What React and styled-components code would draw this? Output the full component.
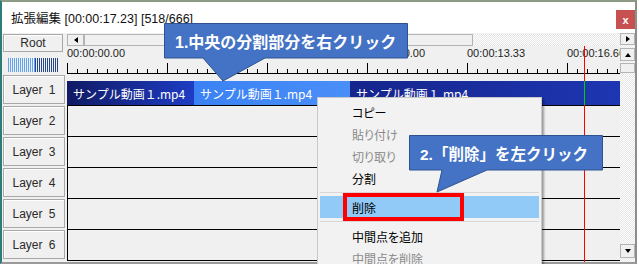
import React from 'react';
import styled, { createGlobalStyle } from 'styled-components';

const FONT = `"Liberation Sans", "Noto Sans CJK JP", sans-serif`;
const JP = `"Noto Sans CJK JP", sans-serif`;

const GlobalStyle = createGlobalStyle`
  html, body { margin: 0; padding: 0; background: #ffffff; }
  body { font-family: ${FONT}; }
  * { box-sizing: border-box; }
`;

const Stage = styled.div`
  position: relative;
  width: 639px;
  height: 264px;
  overflow: hidden;
  background: #ffffff;
`;

const Window = styled.div`
  width: 637px;
  height: 264px;
  display: flex;
  flex-direction: column;
  border-top: 2px solid #8c9a86;
  border-left: 2px solid #2c7c78;
  border-right: 2px solid #8a8f8a;
  border-bottom: 2px solid #9a9a9a;
  background: #f0f0f0;
`;

const TitleBar = styled.div`
  height: 31px;
  flex: none;
  display: flex;
  align-items: center;
  padding-left: 9px;
  background: #ffffff;
  font-size: 12.5px;
  color: #111;
`;

const CloseButton = styled.div`
  margin-left: auto;
  margin-top: 4px;
  width: 19px;
  height: 19px;
  background: #c75050;
  color: #ffffff;
  font: bold 11px ${FONT};
  display: flex;
  align-items: center;
  justify-content: center;
`;

const Body = styled.div`
  flex: 1;
  min-height: 0;
  display: flex;
`;

const LeftColumn = styled.div`
  width: 65px;
  flex: none;
  display: flex;
  flex-direction: column;
  padding: 1px 0 0 1px;
`;

const HeadButton = styled.div`
  width: ${p => p.$w}px;
  height: ${p => p.$h}px;
  margin-top: ${p => p.$mt}px;
  flex: none;
  display: flex;
  align-items: center;
  justify-content: center;
  background: #f0f0f0;
  border: 1px solid #a8a8a8;
  box-shadow: inset 1px 1px 0 #ffffff;
  font-size: 12px;
  color: #2a2a2a;
  word-spacing: 3px;
`;

const Waveform = styled.div`
  display: flex;
  width: 51px;
  height: 14px;
  margin: 6px 0 0 5px;
  flex: none;
`;

const WaveHalf = styled.div`
  width: ${p => p.$w}px;
  height: 100%;
  background: repeating-linear-gradient(to right, ${p => p.$color} 0 1px, transparent 1px 2px);
`;

const Timeline = styled.div`
  width: 553px;
  flex: none;
  position: relative;
  display: flex;
  flex-direction: column;
  overflow: hidden;
`;

const dither = `repeating-conic-gradient(#ffffff 0 25%, #e6e6e6 0 50%) 0 0 / 2px 2px`;

const HScroll = styled.div`
  height: 12px;
  margin-top: 1px;
  flex: none;
  display: flex;
  background: ${dither};
`;

const ScrollButton = styled.div`
  width: ${p => p.$w}px;
  height: ${p => p.$h}px;
  margin-top: ${p => p.$mt || 0}px;
  flex: none;
  display: flex;
  align-items: center;
  justify-content: center;
  background: #f0f0f0;
  border: 1px solid #b4b4b4;
`;

const Tri = styled.span`
  width: 0;
  height: 0;
  border-style: solid;
  border-color: transparent;
  ${p => p.$dir === 'left' && 'border-width: 3px 4px 3px 0; border-right-color: #000;'}
  ${p => p.$dir === 'right' && 'border-width: 3px 0 3px 4px; border-left-color: #000;'}
  ${p => p.$dir === 'up' && 'border-width: 0 3px 4px 3px; border-bottom-color: #000;'}
  ${p => p.$dir === 'down' && 'border-width: 4px 3px 0 3px; border-top-color: #000;'}
`;

const HThumb = styled.div`
  width: 389px;
  flex: none;
  background: #f0f0f0;
  border: 1px solid #b4b4b4;
`;

const Ruler = styled.div`
  height: 28px;
  flex: none;
  padding-top: 1px;
  display: flex;
  flex-direction: column;
`;

const Labels = styled.div`
  height: 14px;
  display: flex;
  font: 11px "Liberation Sans", sans-serif;
  color: #1e1e1e;
  white-space: nowrap;
`;

const Label = styled.div`
  width: 100px;
  flex: none;
`;

const Ticks = styled.div`
  height: 13px;
  background:
    linear-gradient(#000, #000) left bottom / 100% 1px no-repeat,
    repeating-linear-gradient(to right, #000 0 1px, transparent 1px 100px) left bottom / 100% 11px no-repeat,
    repeating-linear-gradient(to right, #000 0 1px, transparent 1px 10px) left bottom / 100% 5px no-repeat;
`;

const Row = styled.div`
  height: ${p => (p.$first ? 32 : 31)}px;
  flex: none;
  display: flex;
  align-items: flex-start;
  border-bottom: 1px solid #000;
  border-left: ${p => (p.$first ? 'none' : '1px solid #000')};
`;

const Clip = styled.div`
  width: ${p => p.$w}px;
  height: 24px;
  margin-top: 7px;
  flex: none;
  display: flex;
  align-items: center;
  padding-left: 6px;
  background: ${p => p.$bg};
  color: #ffffff;
  font: 12px ${JP};
  white-space: nowrap;
  overflow: hidden;
`;

const CursorLine = styled.div`
  position: absolute;
  left: 517px;
  top: ${p => p.$top}px;
  height: ${p => (p.$h ? `${p.$h}px` : 'auto')};
  bottom: ${p => (p.$h ? 'auto' : '0')};
  width: 1px;
  background: ${p => p.$color};
`;

const RightColumn = styled.div`
  width: 15px;
  flex: none;
  display: flex;
  flex-direction: column;
  background: ${dither};
  padding-bottom: 4px;
`;

const VThumb = styled.div`
  height: 10px;
  margin-top: 2px;
  flex: none;
  background: #f0f0f0;
  border: 1px solid #b4b4b4;
`;

const Spacer = styled.div`
  flex: 1;
`;

const Menu = styled.div`
  position: absolute;
  left: 317px;
  top: 97px;
  width: 225px;
  height: 190px;
  padding-top: 3px;
  background: #f2f2f2;
  border: 1px solid #c8c8c8;
  box-shadow: 2px 2px 2px rgba(0, 0, 0, 0.35);
  font: 12px ${JP};
  font-feature-settings: "palt";
  z-index: 2;
`;

const MenuItem = styled.div`
  height: 22px;
  margin: 0 2px;
  padding-left: 32px;
  display: flex;
  align-items: center;
  color: ${p => (p.$disabled ? '#8a8a8a' : '#000')};
  background: ${p => (p.$active ? '#91c9f7' : 'transparent')};
`;

const Separator = styled.div`
  height: 7px;
  margin: 0 2px;
  display: flex;
  align-items: center;
  &::after {
    content: '';
    flex: 1;
    height: 1px;
    background: #d7d7d7;
  }
`;

const RedBox = styled.div`
  position: absolute;
  left: 343px;
  top: 193px;
  width: 121px;
  height: 28px;
  border: 4px solid #ff0000;
  z-index: 3;
`;

const Callout = styled.div`
  position: absolute;
  left: ${p => p.$x}px;
  top: ${p => p.$y}px;
  width: ${p => p.$w}px;
  height: ${p => p.$h}px;
  z-index: 4;
`;

const CalloutShape = styled.svg`
  position: absolute;
  inset: 0;
  overflow: visible;
`;

const CalloutText = styled.div`
  position: relative;
  height: 35px;
  display: flex;
  align-items: center;
  padding-left: 11px;
  color: #ffffff;
  font: bold ${p => p.$size}px ${FONT};
  white-space: nowrap;
`;

const clips = [
  { w: 127, bg: 'linear-gradient(to right, #101a64, #1e3cc4)' },
  { w: 156, bg: 'linear-gradient(to right, #3a82f4, #4a8ef8)' },
  { w: 272, bg: 'linear-gradient(to right, #16258c, #1d36b2)' },
];

const times = ['00:00:00.00', '00:00:03.33', '00:00:06.66', '00:00:10.00', '00:00:13.33', '00:00:16.66'];

const App = () => (
  <Stage>
    <GlobalStyle />
    <Window>
      <TitleBar>
        拡張編集 [00:00:17.23] [518/666]
        <CloseButton>x</CloseButton>
      </TitleBar>
      <Body>
        <LeftColumn>
          <HeadButton $w={60} $h={18} $mt={0}>Root</HeadButton>
          <Waveform>
            <WaveHalf $w={27} $color="#62a2f2" />
            <WaveHalf $w={24} $color="#27478c" />
          </Waveform>
          {[1, 2, 3, 4, 5, 6].map(n => (
            <HeadButton key={n} $w={62} $h={29} $mt={n === 1 ? 3 : 2}>
              Layer {n}
            </HeadButton>
          ))}
        </LeftColumn>

        <Timeline>
          <HScroll>
            <ScrollButton $w={17} $h={12}><Tri $dir="left" /></ScrollButton>
            <HThumb />
          </HScroll>
          <Ruler>
            <Labels>
              {times.map(t => <Label key={t}>{t}</Label>)}
            </Labels>
            <Ticks />
          </Ruler>
          <Row $first>
            {clips.map((c, i) => (
              <Clip key={i} $w={c.w} $bg={c.bg}>サンプル動画１.mp4</Clip>
            ))}
          </Row>
          {[2, 3, 4, 5, 6].map(n => <Row key={n} />)}
          <CursorLine $top={13} $color="#ff0000" />
          <CursorLine $top={48} $h={24} $color="#00d000" />
        </Timeline>

        <RightColumn>
          <ScrollButton $w={15} $h={12}><Tri $dir="right" /></ScrollButton>
          <ScrollButton $w={15} $h={13} $mt={3}><Tri $dir="up" /></ScrollButton>
          <VThumb />
          <Spacer />
          <ScrollButton $w={15} $h={14}><Tri $dir="down" /></ScrollButton>
        </RightColumn>
      </Body>
    </Window>

    <Menu>
      <MenuItem>コピー</MenuItem>
      <MenuItem $disabled>貼り付け</MenuItem>
      <MenuItem $disabled>切り取り</MenuItem>
      <MenuItem>分割</MenuItem>
      <Separator />
      <MenuItem $active>削除</MenuItem>
      <Separator />
      <MenuItem>中間点を追加</MenuItem>
      <MenuItem $disabled>中間点を削除</MenuItem>
    </Menu>

    <RedBox />

    <Callout $x={164} $y={23} $w={244} $h={59}>
      <CalloutShape width="244" height="59" viewBox="0 0 244 59">
        <path d="M0.5 0.5 H243.5 V35 H101 L59 58 L39 35 H0.5 Z" fill="#4472c4" stroke="#2f528f" strokeWidth="1" />
      </CalloutShape>
      <CalloutText $size={16}>1.中央の分割部分を右クリック</CalloutText>
    </Callout>

    <Callout $x={409} $y={135} $w={194} $h={58}>
      <CalloutShape width="194" height="58" viewBox="0 0 194 58">
        <path d="M0.5 0.5 H193.5 V35 H78 L28 57 L33 35 H0.5 Z" fill="#4472c4" stroke="#2f528f" strokeWidth="1" />
      </CalloutShape>
      <CalloutText $size={15.5}>2.「削除」を左クリック</CalloutText>
    </Callout>
  </Stage>
);

export default App;
